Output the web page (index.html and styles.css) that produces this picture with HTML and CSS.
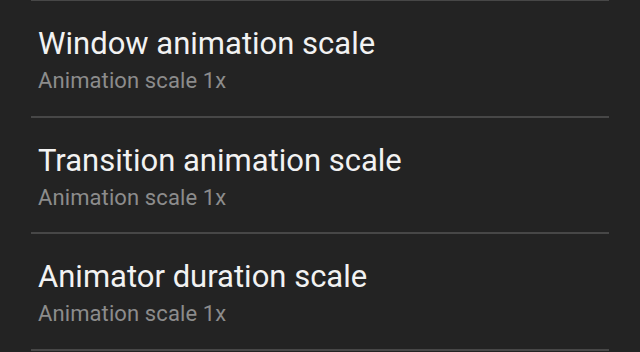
FILE: index.html
```html
<!DOCTYPE html>
<html>
<head>
<meta charset="utf-8">
<link rel="stylesheet" href="styles.css">
</head>
<body>
<div class="list">
  <div class="item">
    <div class="title">Window animation scale</div>
    <div class="summary">Animation scale 1x</div>
  </div>
  <div class="item">
    <div class="title">Transition animation scale</div>
    <div class="summary">Animation scale 1x</div>
  </div>
  <div class="item">
    <div class="title">Animator duration scale</div>
    <div class="summary">Animation scale 1x</div>
  </div>
  <div class="item end"></div>
</div>
</body>
</html>
```
FILE: styles.css
```css
html, body {
  margin: 0;
  padding: 0;
  background: #232323;
  height: 100%;
  overflow: hidden;
}
body {
  font-family: Roboto, "Noto Sans", sans-serif;
}
.list {
  margin: -1px 31px 0 31px;
}
.item {
  border-top: 2px solid #474747;
  height: 114.5px;
  padding-left: 7px;
  box-sizing: content-box;
}
.item.end {
  height: 10px;
}
.title {
  padding-top: 25px;
  font-size: 31px;
  line-height: 36px;
  color: #f2f2f2;
}
.summary {
  font-size: 22px;
  line-height: 26px;
  letter-spacing: 0.1px;
  color: #8c8c8c;
  margin-top: 6px;
}
```
